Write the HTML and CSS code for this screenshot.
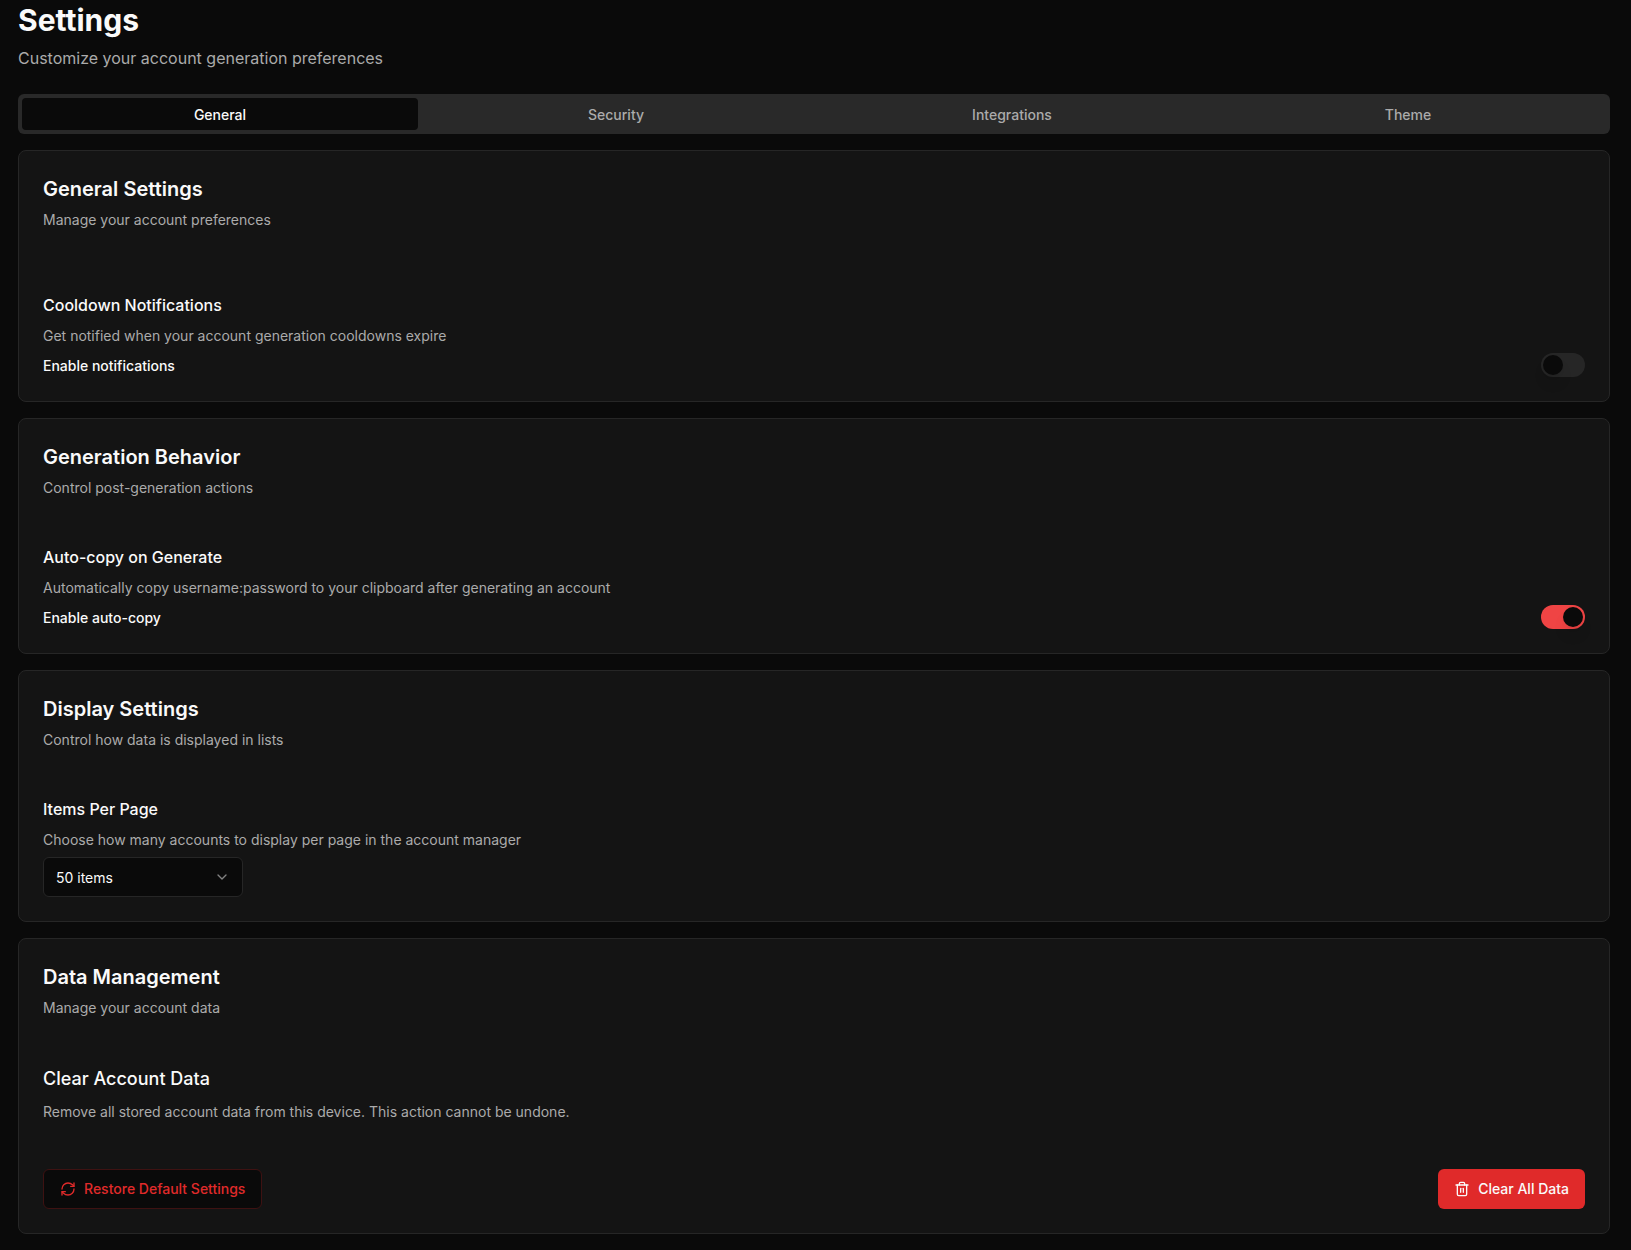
FILE: index.html
```html
<!DOCTYPE html>
<html lang="en">
<head>
<meta charset="utf-8">
<meta name="viewport" content="width=device-width, initial-scale=1">
<title>Settings</title>
<link rel="stylesheet" href="styles.css">
</head>
<body>
<main class="page">
  <header class="page-header">
    <h1 class="page-title">Settings</h1>
    <p class="page-subtitle">Customize your account generation preferences</p>
  </header>

  <div class="tabs" role="tablist">
    <button class="tab tab-active" type="button" role="tab" aria-selected="true">General</button>
    <button class="tab" type="button" role="tab" aria-selected="false">Security</button>
    <button class="tab" type="button" role="tab" aria-selected="false">Integrations</button>
    <button class="tab" type="button" role="tab" aria-selected="false">Theme</button>
  </div>

  <div class="cards">
    <section class="card card-spaced">
      <div class="card-header">
        <h2 class="card-title">General Settings</h2>
        <p class="muted">Manage your account preferences</p>
      </div>
      <div class="setting">
        <h3 class="setting-title">Cooldown Notifications</h3>
        <p class="muted">Get notified when your account generation cooldowns expire</p>
        <div class="switch-row">
          <label class="switch-label" for="notifications">Enable notifications</label>
          <input class="switch" type="checkbox" role="switch" id="notifications">
        </div>
      </div>
    </section>

    <section class="card">
      <div class="card-header">
        <h2 class="card-title">Generation Behavior</h2>
        <p class="muted">Control post-generation actions</p>
      </div>
      <div class="setting">
        <h3 class="setting-title">Auto-copy on Generate</h3>
        <p class="muted">Automatically copy username:password to your clipboard after generating an account</p>
        <div class="switch-row">
          <label class="switch-label" for="autocopy">Enable auto-copy</label>
          <input class="switch" type="checkbox" role="switch" id="autocopy" checked>
        </div>
      </div>
    </section>

    <section class="card">
      <div class="card-header">
        <h2 class="card-title">Display Settings</h2>
        <p class="muted">Control how data is displayed in lists</p>
      </div>
      <div class="setting">
        <h3 class="setting-title"><label for="per-page">Items Per Page</label></h3>
        <p class="muted">Choose how many accounts to display per page in the account manager</p>
        <div class="select-wrap">
          <select class="select" id="per-page">
            <option>10 items</option>
            <option>25 items</option>
            <option selected>50 items</option>
            <option>100 items</option>
          </select>
          <svg class="icon select-chevron" viewBox="0 0 24 24" aria-hidden="true"><path d="m6 9 6 6 6-6"/></svg>
        </div>
      </div>
    </section>

    <section class="card">
      <div class="card-header">
        <h2 class="card-title">Data Management</h2>
        <p class="muted">Manage your account data</p>
      </div>
      <div class="setting">
        <h3 class="setting-title setting-title-large">Clear Account Data</h3>
        <p class="muted">Remove all stored account data from this device. This action cannot be undone.</p>
      </div>
      <div class="card-actions">
        <button class="button button-outline" type="button">
          <svg class="icon" viewBox="0 0 24 24" aria-hidden="true"><path d="M3 12a9 9 0 0 1 9-9 9.75 9.75 0 0 1 6.74 2.74L21 8"/><path d="M21 3v5h-5"/><path d="M21 12a9 9 0 0 1-9 9 9.75 9.75 0 0 1-6.74-2.74L3 16"/><path d="M8 16H3v5"/></svg>
          Restore Default Settings
        </button>
        <button class="button button-danger" type="button">
          <svg class="icon" viewBox="0 0 24 24" aria-hidden="true"><path d="M3 6h18"/><path d="M19 6v14c0 1-1 2-2 2H7c-1 0-2-1-2-2V6"/><path d="M8 6V4c0-1 1-2 2-2h4c1 0 2 1 2 2v2"/><path d="M10 11v6"/><path d="M14 11v6"/></svg>
          Clear All Data
        </button>
      </div>
    </section>
  </div>
</main>
</body>
</html>
```
FILE: styles.css
```css
:root {
  --background: #0a0a0a;
  --card: #141414;
  --border: #262626;
  --muted: #292929;
  --text: #fafafa;
  --text-muted: #ababab;
  --red: #ef4444;
  --danger: #e02a2a;
}

*,
*::before {
  box-sizing: border-box;
}

body {
  margin: 0;
  background: var(--background);
  color: var(--text);
  font-family: Inter, "Liberation Sans", sans-serif;
  font-size: 14px;
  line-height: 22px;
}

h1,
h2,
h3,
p {
  margin: 0;
}

button,
select {
  font: inherit;
  color: inherit;
}

.page {
  display: flex;
  flex-direction: column;
  padding: 2px 21px 16px 18px;
}

.page-header {
  display: flex;
  flex-direction: column;
  gap: 8px;
  margin-bottom: 24px;
}

.page-title {
  font-size: 30px;
  line-height: 36px;
  font-weight: 700;
}

.page-subtitle {
  font-size: 16px;
  line-height: 24px;
  color: var(--text-muted);
}

.tabs {
  display: grid;
  grid-template-columns: repeat(4, 1fr);
  padding: 4px;
  margin-bottom: 16px;
  border-radius: 6px;
  background: var(--muted);
}

.tab {
  height: 32px;
  padding: 2px 12px 0;
  border: 0;
  border-radius: 4px;
  background: transparent;
  color: var(--text-muted);
  font-weight: 500;
}

.tab-active {
  background: var(--background);
  color: var(--text);
}

.cards {
  display: flex;
  flex-direction: column;
  gap: 16px;
}

.card {
  display: flex;
  flex-direction: column;
  padding: 24px;
  border: 1px solid var(--border);
  border-radius: 8px;
  background: var(--card);
}

.card-header {
  display: flex;
  flex-direction: column;
  gap: 6px;
  margin-bottom: 46px;
}

.card-spaced .card-header {
  margin-bottom: 62px;
}

.card-title {
  font-size: 20px;
  line-height: 28px;
  font-weight: 600;
}

.muted {
  color: var(--text-muted);
}

.setting {
  display: flex;
  flex-direction: column;
}

.setting .muted {
  margin: 8px 0 6px;
}

.setting-title {
  font-size: 16px;
  line-height: 24px;
  font-weight: 500;
}

.setting-title-large {
  font-size: 18px;
  line-height: 28px;
}

.switch-row {
  display: flex;
  align-items: center;
  justify-content: space-between;
}

.switch-label {
  padding-top: 2px;
  font-weight: 500;
}

.switch {
  appearance: none;
  width: 44px;
  height: 24px;
  margin: 0;
  padding: 2px;
  border-radius: 12px;
  background: var(--border);
}

.switch::before {
  content: "";
  display: block;
  width: 20px;
  height: 20px;
  border-radius: 50%;
  background: var(--background);
  box-shadow: 0 10px 15px -3px rgba(0, 0, 0, 0.1), 0 4px 6px -4px rgba(0, 0, 0, 0.1);
}

.switch:checked {
  background: var(--red);
}

.switch:checked::before {
  margin-left: auto;
}

.icon {
  flex: none;
  width: 16px;
  height: 16px;
  fill: none;
  stroke: currentColor;
  stroke-width: 2;
  stroke-linecap: round;
  stroke-linejoin: round;
}

.select-wrap {
  display: grid;
  align-items: center;
  width: 200px;
}

.select {
  grid-area: 1 / 1;
  appearance: none;
  width: 100%;
  height: 40px;
  padding: 2px 36px 0 12px;
  border: 1px solid var(--border);
  border-radius: 6px;
  background: var(--background);
}

.select-chevron {
  grid-area: 1 / 1;
  justify-self: end;
  margin-right: 13px;
  opacity: 0.5;
  pointer-events: none;
}

.card-actions {
  display: flex;
  justify-content: space-between;
  margin-top: 40px;
}

.button {
  display: flex;
  align-items: center;
  gap: 8px;
  height: 40px;
  padding: 0 16px;
  border: 0;
  border-radius: 6px;
  font-weight: 500;
}

.button-outline {
  border: 1px solid #3e1212;
  background: var(--background);
  color: var(--danger);
}

.button-danger {
  background: var(--danger);
}
```
